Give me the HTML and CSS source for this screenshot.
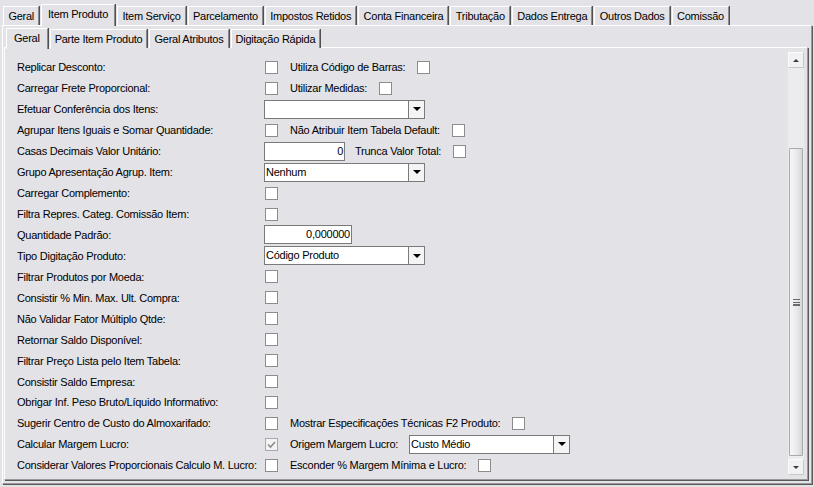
FILE: index.html
```html
<!DOCTYPE html>
<html lang="pt">
<head>
<meta charset="utf-8">
<link rel="stylesheet" href="styles.css">
</head>
<body>
<div class="app">
  <div class="tabbar top">
    <div class="tab first">Geral</div>
    <div class="tab active">Item Produto</div>
    <div class="tab">Item Serviço</div>
    <div class="tab">Parcelamento</div>
    <div class="tab">Impostos Retidos</div>
    <div class="tab">Conta Financeira</div>
    <div class="tab">Tributação</div>
    <div class="tab">Dados Entrega</div>
    <div class="tab">Outros Dados</div>
    <div class="tab">Comissão</div>
  </div>
  <div class="panel outer">
    <div class="tabbar sub">
      <div class="tab active first">Geral</div>
      <div class="tab">Parte Item Produto</div>
      <div class="tab">Geral Atributos</div>
      <div class="tab">Digitação Rápida</div>
    </div>
    <div class="panel inner">
      <div class="form">
        <div class="row"><span class="lbl">Replicar Desconto:</span><span class="cb"></span><span class="lbl2">Utiliza Código de Barras:</span><span class="cb after"></span></div>
        <div class="row"><span class="lbl">Carregar Frete Proporcional:</span><span class="cb"></span><span class="lbl2">Utilizar Medidas:</span><span class="cb after"></span></div>
        <div class="row"><span class="lbl">Efetuar Conferência dos Itens:</span><span class="sel"><span class="val"></span><span class="btn"><i class="arrow"></i></span></span></div>
        <div class="row"><span class="lbl">Agrupar Itens Iguais e Somar Quantidade:</span><span class="cb"></span><span class="lbl2">Não Atribuir Item Tabela Default:</span><span class="cb after"></span></div>
        <div class="row"><span class="lbl">Casas Decimais Valor Unitário:</span><span class="txt w81">0</span><span class="lbl3">Trunca Valor Total:</span><span class="cb after"></span></div>
        <div class="row"><span class="lbl">Grupo Apresentação Agrup. Item:</span><span class="sel"><span class="val">Nenhum</span><span class="btn"><i class="arrow"></i></span></span></div>
        <div class="row"><span class="lbl">Carregar Complemento:</span><span class="cb"></span></div>
        <div class="row"><span class="lbl">Filtra Repres. Categ. Comissão Item:</span><span class="cb"></span></div>
        <div class="row"><span class="lbl">Quantidade Padrão:</span><span class="txt w88">0,000000</span></div>
        <div class="row"><span class="lbl">Tipo Digitação Produto:</span><span class="sel"><span class="val">Código Produto</span><span class="btn"><i class="arrow"></i></span></span></div>
        <div class="row"><span class="lbl">Filtrar Produtos por Moeda:</span><span class="cb"></span></div>
        <div class="row"><span class="lbl">Consistir % Min. Max. Ult. Compra:</span><span class="cb"></span></div>
        <div class="row"><span class="lbl">Não Validar Fator Múltiplo Qtde:</span><span class="cb"></span></div>
        <div class="row"><span class="lbl">Retornar Saldo Disponível:</span><span class="cb"></span></div>
        <div class="row"><span class="lbl">Filtrar Preço Lista pelo Item Tabela:</span><span class="cb"></span></div>
        <div class="row"><span class="lbl">Consistir Saldo Empresa:</span><span class="cb"></span></div>
        <div class="row"><span class="lbl">Obrigar Inf. Peso Bruto/Líquido Informativo:</span><span class="cb"></span></div>
        <div class="row"><span class="lbl">Sugerir Centro de Custo do Almoxarifado:</span><span class="cb"></span><span class="lbl2">Mostrar Especificações Técnicas F2 Produto:</span><span class="cb after"></span></div>
        <div class="row"><span class="lbl">Calcular Margem Lucro:</span><span class="cb on"><svg viewBox="0 0 11 11" width="11" height="11"><path d="M2 5.5 L4.5 8 L9 3" fill="none" stroke="#8a8a8a" stroke-width="1.6"/></svg></span><span class="lbl2">Origem Margem Lucro:</span><span class="sel after2"><span class="val">Custo Médio</span><span class="btn"><i class="arrow"></i></span></span></div>
        <div class="row"><span class="lbl">Considerar Valores Proporcionais Calculo M. Lucro:</span><span class="cb"></span><span class="lbl2">Esconder % Margem Mínima e Lucro:</span><span class="cb after"></span></div>
      </div>
      <div class="scrollbar">
        <div class="sbtn"><i class="sarrow up"></i></div>
        <div class="track">
          <div class="thumb"><span class="grip"></span></div>
        </div>
        <div class="sbtn"><i class="sarrow down"></i></div>
      </div>
    </div>
  </div>
</div>
</body>
</html>
```

FILE: styles.css
```css
* { box-sizing: border-box; }
html, body {
  margin: 0;
  width: 814px;
  height: 487px;
  overflow: hidden;
  background: #e3e2e7;
}
body {
  font-family: "Liberation Sans", Arial, sans-serif;
  font-size: 11px;
  letter-spacing: -0.25px;
  color: #000;
}
.app {
  padding: 0 0 0 2px;
}

/* tabs */
.tabbar {
  display: flex;
  align-items: flex-end;
  position: relative;
  z-index: 2;
}
.tabbar.top {
  height: 25px;
  padding-left: 1px;
}
.tabbar.sub {
  height: 22px;
  padding-left: 2px;
  margin-bottom: -1px;
}
.tab {
  height: 19px;
  line-height: 18px;
  padding: 0 4px 0 4.4px;
  border-top: 1px solid #fff;
  border-left: 1px solid #fff;
  border-right: 1px solid #8a8a8a;
  box-shadow: 1px 0 0 #505050;
  margin-right: 2px;
  background: #e3e2e7;
  white-space: nowrap;
}
.tab.active {
  height: 22px;
  line-height: 19px;
  margin-bottom: -1px;
  padding: 0 6px 0 6px;
  position: relative;
  z-index: 3;
}
.tabbar.sub .tab {
  padding: 0 4px 0 4px;
}
.tabbar.sub .tab.active {
  height: 21px;
  padding: 0 7px 0 7px;
  line-height: 18px;
}

/* panels */
.panel.outer {
  width: 810px;
  height: 459px;
  border-top: 1px solid #fff;
  border-left: 1px solid #fff;
  border-right: 1px solid #9a9a9a;
  border-bottom: 1px solid #9a9a9a;
  box-shadow: 1px 1px 0 #5a5a5a, 3px 3px 0 #e3e2e7, 4px 4px 0 #8a8a8a;
  padding: 0 3px 0 1px;
}
.panel.inner {
  display: flex;
  height: 433px;
  border-top: 1px solid #fff;
  border-left: 1px solid #fff;
  border-right: 1px solid #9a9a9a;
  border-bottom: 1px solid #9a9a9a;
  box-shadow: 1px 1px 0 #5a5a5a;
  position: relative;
  z-index: 1;
}

/* form */
.form {
  flex: 1;
  padding: 9px 0 0 12px;
  display: grid;
  grid-auto-rows: 20.95px;
  align-content: start;
}
.row {
  display: flex;
  align-items: center;
  white-space: nowrap;
}
.lbl {
  width: 247px;
  flex: none;
}
.lbl2 { margin-left: 12px; }
.lbl3 { margin-left: 10px; }
.cb {
  width: 13px;
  height: 13px;
  flex: none;
  margin-left: 1px;
  border: 1px solid #8c8c8c;
  background: #fff;
  display: inline-flex;
  align-items: center;
  justify-content: center;
}
.cb.after { margin-left: 12px; }
.cb.on { background: #f3f3f3; border-color: #a8a8a8; }
.cb svg { display: block; }

.sel {
  width: 161px;
  height: 19px;
  flex: none;
  display: flex;
  border: 1px solid #7a7a7a;
  background: #fff;
}
.sel.after2 { margin-left: 11px; }
.sel .val {
  flex: 1;
  line-height: 17px;
  padding-left: 1px;
}
.sel .btn {
  width: 16px;
  border-left: 1px solid #7a7a7a;
  background: #f4f4f4;
  display: flex;
  align-items: center;
  justify-content: center;
}
.arrow {
  width: 0;
  height: 0;
  border-left: 4px solid transparent;
  border-right: 4px solid transparent;
  border-top: 4px solid #000;
}
.txt {
  height: 19px;
  flex: none;
  border: 1px solid #7a7a7a;
  background: #fff;
  text-align: right;
  line-height: 17px;
  padding-right: 1px;
}
.w81 { width: 81px; }
.w88 { width: 88px; }

/* scrollbar */
.scrollbar {
  width: 16px;
  flex: none;
  margin: 4px 3px 4px 0;
  display: flex;
  flex-direction: column;
  background: #ececef;
}
.sbtn {
  height: 16px;
  background: #f1f1f3;
  border: 1px solid #fbfbfb;
  border-right-color: #c8c8c8;
  border-bottom-color: #c8c8c8;
  display: flex;
  align-items: center;
  justify-content: center;
}
.sarrow {
  width: 0;
  height: 0;
  border-left: 3px solid transparent;
  border-right: 3px solid transparent;
}
.sarrow.up { border-bottom: 3px solid #3c3c3c; }
.sarrow.down { border-top: 3px solid #3c3c3c; }
.track {
  flex: 1;
  padding: 80px 1px 3px 1px;
  display: flex;
  flex-direction: column;
}
.thumb {
  flex: 1;
  border: 1px solid #a9a9ab;
  border-radius: 1px;
  background: linear-gradient(to right, #f7f7f8, #e8e8ea 60%, #d6d6d9);
  display: flex;
  align-items: center;
  justify-content: center;
}
.grip {
  width: 7px;
  height: 7px;
  border-top: 1px solid #6a6a6a;
  border-bottom: 1px solid #6a6a6a;
  background: linear-gradient(#6a6a6a, #6a6a6a) 0 2px / 7px 1px no-repeat, linear-gradient(#6a6a6a, #6a6a6a) 0 4px / 7px 1px no-repeat;
}
```
